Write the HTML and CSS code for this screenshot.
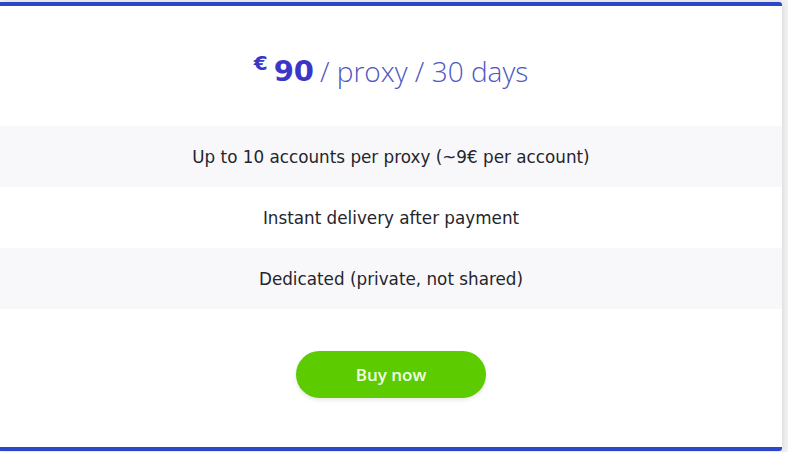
FILE: index.html
```html
<!DOCTYPE html>
<html>
<head>
	<title>Proxy plan</title>
	<link rel="stylesheet" href="styles.css">
</head>
<body>

	<!-- Pricing card -->
	<div class="plan-card">
		<div class="plan-price">
			<sup class="currency">€</sup>
			<span class="amount">90</span>
			<span class="period">/ proxy / 30 days</span>
		</div>

		<ul class="plan-features">
			<li>Up to 10 accounts per proxy (~9€ per account)</li>
			<li>Instant delivery after payment</li>
			<li>Dedicated (private, not shared)</li>
		</ul>

		<div class="plan-action">
			<button class="buy-btn">Buy now</button>
		</div>
	</div>

</body>
</html>
```
FILE: styles.css
```css
/* Page */
body {
	margin: 0;
	padding: 2px 0;
	background-color: #f3f3f5;
	font-family: "DejaVu Sans", sans-serif;
}

/* Card with blue edges top and bottom */
.plan-card {
	width: 782px;
	background-color: #fff;
	border-top: 4px solid #2c48c9;
	border-bottom: 4px solid #2c48c9;
	border-radius: 0 3px 3px 0;
	box-shadow: 1px 0 6px rgba(0, 0, 0, 0.12);
}

/* Price line */
.plan-price {
	height: 120px;
	padding-top: 9px;
	box-sizing: border-box;
	display: flex;
	align-items: center;
	justify-content: center;
	color: #4b4fc6;
}

.currency {
	font-size: 20px;
	font-weight: bold;
	color: #3b36c8;
	margin-right: 6px;
	position: relative;
	top: -8px;
}

.amount {
	font-size: 29px;
	font-weight: bold;
	color: #3b36c8;
	margin-right: 6px;
}

.period {
	font-family: "Open Sans", sans-serif;
	font-weight: 300;
	font-size: 28px;
	color: #4f56c4;
}

/* Feature rows */
.plan-features {
	list-style: none;
	margin: 0;
	padding: 0;
}

.plan-features li {
	height: 61px;
	display: flex;
	align-items: center;
	justify-content: center;
	font-size: 16.8px;
	color: #25252d;
}

.plan-features li:nth-child(odd) {
	background-color: #f8f8fa;
}

/* Button area */
.plan-action {
	height: 138px;
	display: flex;
	justify-content: center;
	padding-top: 42px;
	box-sizing: border-box;
}

.buy-btn {
	width: 190px;
	height: 47px;
	border: none;
	border-radius: 24px;
	background-color: #5ccb00;
	color: #f2ffe6;
	font-family: "Open Sans", sans-serif;
	font-size: 17px;
	font-weight: 600;
	box-shadow: 0 2px 4px rgba(0, 0, 0, 0.1);
	cursor: pointer;
}
```
